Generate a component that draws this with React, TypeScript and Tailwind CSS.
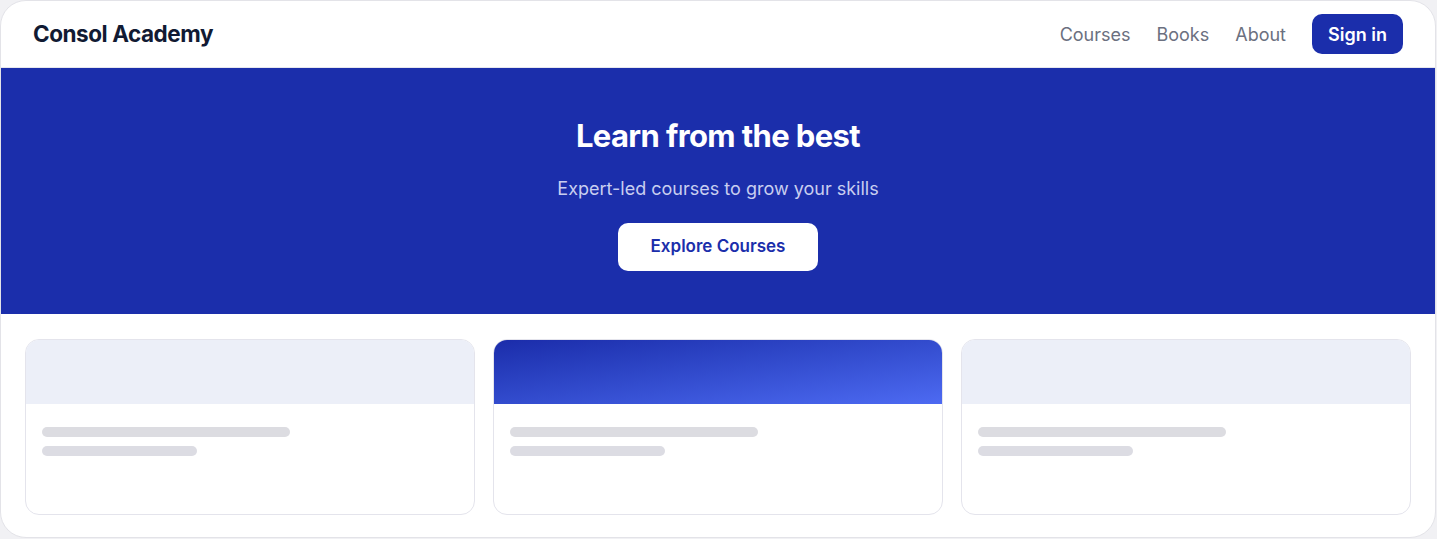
const navLinks = ['Courses', 'Books', 'About'];

const cards = [
  { id: 1, header: 'bg-[#eceff8]' },
  { id: 2, header: 'bg-gradient-to-br from-[#1b2caa] to-[#4d6af2]' },
  { id: 3, header: 'bg-[#eceff8]' },
];

function CourseCard({ header }: { header: string }) {
  return (
    <div className="overflow-hidden rounded-[14px] border border-[#e4e4ec] bg-white">
      <div className={`h-16 ${header}`} />
      <div className="h-[110px] px-4 pt-[23px]">
        <div className="h-2.5 w-[248px] rounded-full bg-[#dcdce1]" />
        <div className="mt-[9px] h-2.5 w-[155px] rounded-full bg-[#dcdce3]" />
      </div>
    </div>
  );
}

export default function App() {
  return (
    <div className="min-h-screen bg-[#f1f1f4] font-['Inter',sans-serif]">
      <div className="h-[538px] w-[1436px] overflow-hidden rounded-[26px] border border-[#e3e3e8] bg-white">
        <header className="flex h-[67px] items-center justify-between border-b border-[#e6e7ee] pl-8 pr-8">
          <h1 className="text-[22.5px] font-bold tracking-[-0.02em] text-[#111a33]">
            Consol Academy
          </h1>
          <nav className="flex items-center gap-[26px]">
            {navLinks.map((link) => (
              <a key={link} className="text-[18px] text-[#6b7080]">
                {link}
              </a>
            ))}
            <button className="h-10 w-[91px] rounded-[10px] bg-[#1b2eab] text-[18px] font-semibold text-white">
              Sign in
            </button>
          </nav>
        </header>

        <section className="flex h-[246px] flex-col items-center bg-[#1b2eab] pt-[50px]">
          <h2 className="text-[31px] font-bold leading-[36px] tracking-[-0.02em] text-white">
            Learn from the best
          </h2>
          <p className="mt-[21px] text-[18px] leading-[27px] text-[#c9cef0]">
            Expert-led courses to grow your skills
          </p>
          <button className="mt-[21px] h-12 w-[200px] rounded-[10px] bg-white text-[17px] font-semibold text-[#1b2eab]">
            Explore Courses
          </button>
        </section>

        <div className="grid grid-cols-3 gap-[18px] px-6 pt-[25px]">
          {cards.map((card) => (
            <CourseCard key={card.id} header={card.header} />
          ))}
        </div>
      </div>
    </div>
  );
}
